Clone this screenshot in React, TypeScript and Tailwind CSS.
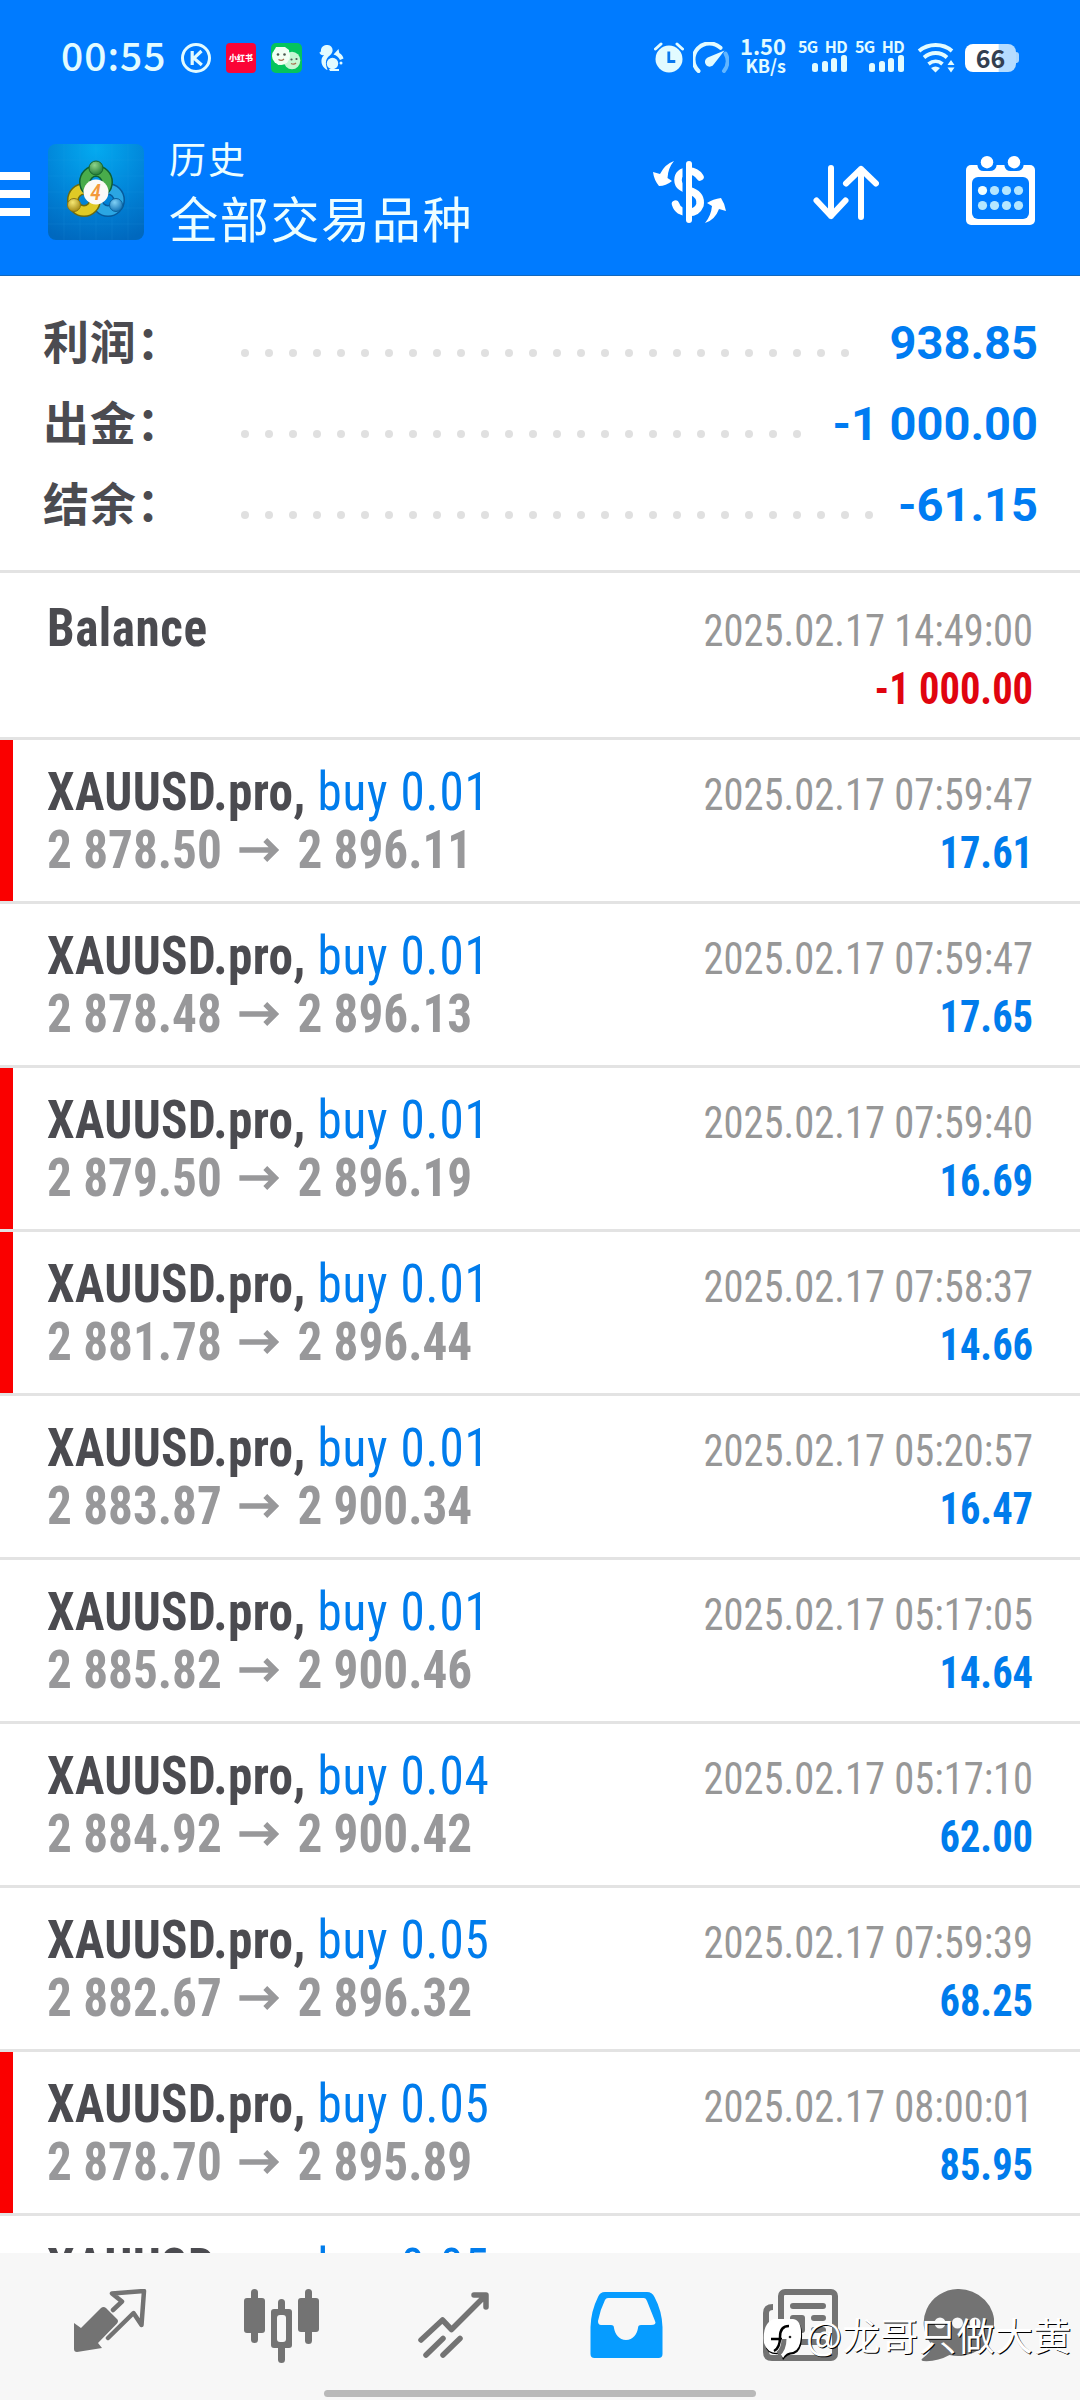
import type { ReactNode } from "react";

interface Deal {
    volume: string;
    open: string;
    close: string;
    time: string;
    profit: string;
    marked?: boolean;
}

const summary = [
    { label: "利润：", value: "938.85", dots: 26 },
    { label: "出金：", value: "-1 000.00", dots: 24 },
    { label: "结余：", value: "-61.15", dots: 27 },
];

const deals: Deal[] = [
    { volume: "0.01", open: "2 878.50", close: "2 896.11", time: "07:59:47", profit: "17.61", marked: true },
    { volume: "0.01", open: "2 878.48", close: "2 896.13", time: "07:59:47", profit: "17.65" },
    { volume: "0.01", open: "2 879.50", close: "2 896.19", time: "07:59:40", profit: "16.69", marked: true },
    { volume: "0.01", open: "2 881.78", close: "2 896.44", time: "07:58:37", profit: "14.66", marked: true },
    { volume: "0.01", open: "2 883.87", close: "2 900.34", time: "05:20:57", profit: "16.47" },
    { volume: "0.01", open: "2 885.82", close: "2 900.46", time: "05:17:05", profit: "14.64" },
    { volume: "0.04", open: "2 884.92", close: "2 900.42", time: "05:17:10", profit: "62.00" },
    { volume: "0.05", open: "2 882.67", close: "2 896.32", time: "07:59:39", profit: "68.25" },
    { volume: "0.05", open: "2 878.70", close: "2 895.89", time: "08:00:01", profit: "85.95", marked: true },
];

function Signal() {
    return (
        <div className="flex w-[48px] flex-col items-end pb-[4px]">
            <span className="whitespace-nowrap font-['Noto_Sans_CJK_SC',sans-serif] text-[16px] font-bold leading-[17px] tracking-[-0.6px] [word-spacing:4px]">5G HD</span>
            <svg width="36" height="18" viewBox="0 0 36 18" fill="currentColor">
                <rect x="1" y="8" width="6" height="9" rx="2.5" />
                <rect x="11" y="6" width="6" height="11" rx="2.5" />
                <rect x="20" y="3" width="6" height="14" rx="2.5" />
                <rect x="30" y="0" width="6" height="17" rx="2.5" />
            </svg>
        </div>
    );
}

function StatusBar() {
    return (
        <div className="flex h-[115px] items-center pl-[61px] pr-[61px] text-[#e2fbff]">
            <span className="w-[120px] pb-[7px] font-['Noto_Sans_CJK_SC',sans-serif] text-[39px] font-medium leading-[40px] tracking-[1px]">00:55</span>
            <svg width="30" height="30" viewBox="0 0 30 30" fill="none" stroke="currentColor" strokeWidth="3">
                <circle cx="15" cy="15" r="13.5" />
                <path d="M11.2 8v14M20.5 8l-7.5 7.2L20.8 22" strokeWidth="3.2" />
            </svg>
            {/* Notification icons */}
            <div className="ml-[15px] flex size-[30px] items-center justify-center rounded-[4px] bg-[#fb0336] font-['Noto_Sans_CJK_SC',sans-serif] text-[8px] font-black text-white">
                <span className="whitespace-nowrap">小红书</span>
            </div>
            <svg className="ml-[15px]" width="31" height="30" viewBox="0 0 31 30">
                <rect width="31" height="30" rx="5" fill="#05c45c" />
                <path d="M3 8l2-4 9 0 4 3 1 13-12 2z" fill="#f2fff4" />
                <ellipse cx="21" cy="17.5" rx="8.3" ry="8.7" fill="#c5f7d3" />
                <circle cx="10" cy="13" r="9" fill="#f2fff4" />
                <g fill="#4d5a50">
                    <circle cx="7" cy="11.5" r="1.3" />
                    <circle cx="13.5" cy="11.5" r="1.3" />
                    <circle cx="20.5" cy="16.5" r="1.1" />
                    <circle cx="25.5" cy="16" r="1.1" />
                </g>
                <path d="M7.5 16.5q3 2 5.5-.5M20 20.5q3 1.5 5-.5" fill="none" stroke="#a86d4d" strokeWidth="1.2" />
            </svg>
            <svg className="ml-[17px]" width="25" height="26" viewBox="0 0 25 26" fill="currentColor">
                <path d="M7 0c5-.5 7.5 3 6.3 7-1 3-3.8 4-5.3 6.5C6 17 7 20.5 8.5 25 4.500 23 2 19.5 2.5 15c.3-2 1.100-3.5 2.500-5C3 10.5 1 9.500.3 7.500 2 7.300 2 6 2 4.500 2.400 2 4.500.3 7 0z" />
                <circle cx="13.5" cy="18.5" r="5.7" />
                <path d="M10 24h10v2h-9zM14.5 9.5l5-5.5.8 4c2.2 1.2 3.6 3 4.2 5.5l-3.5 1.5c-1.5-3-3.5-4.7-6.5-5.5z" />
                <circle cx="22" cy="18" r="1.5" />
            </svg>

            <div className="ml-auto flex items-center">
                <svg width="30" height="31" viewBox="0 0 30 31" fill="currentColor">
                    <circle cx="15" cy="17" r="13.5" />
                    <path d="M1.5 7L7 2M28.5 7L23 2" stroke="currentColor" strokeWidth="3" fill="none" strokeLinecap="round" />
                    <path d="M14.8 9.5v10h6.5" stroke="#0a78ee" strokeWidth="2.8" fill="none" />
                </svg>
                <svg className="ml-[9px]" width="36" height="31" viewBox="0 0 36 31" fill="none" strokeLinecap="round">
                    <path d="M5.5 29A15.6 15.6 0 0 1 27.5 5.8" stroke="currentColor" strokeWidth="4" />
                    <path d="M32.5 11.5A15.6 15.6 0 0 1 31 29" stroke="#62b6ff" strokeWidth="4" />
                    <path d="M31.5 8.5L21 22a4.8 4.8 0 1 1-6.3-6.5z" fill="currentColor" />
                </svg>
                <div className="ml-[12px] flex w-[45px] flex-col items-end pb-[5px] font-['Noto_Sans_CJK_SC',sans-serif] font-bold">
                    <span className="text-[22px] leading-[18px]">1.50</span>
                    <span className="mt-[2px] text-[18px] leading-[18px]">KB/s</span>
                </div>
                <div className="ml-[13px]"><Signal /></div>
                <div className="ml-[9px]"><Signal /></div>
                <svg className="ml-[13px]" width="38" height="31" viewBox="0 0 38 31" fill="none">
                    <path d="M2 9c9.5-8 24-8 33 0M7 15.5c7-6 16.5-6 23 0M11.5 22c4.5-3.5 10-3.5 14 0" stroke="currentColor" strokeWidth="3.8" />
                    <path d="M14 26q4.5-3 9 0l-4.5 4.5zM30.5 23l3.5-5 3.5 5zM30.5 25.5l3.5 5 3.5-5z" fill="currentColor" />
                </svg>
                <div className="ml-[10px] flex items-center">
                    <div className="flex h-[28px] w-[51px] items-center justify-center rounded-[8px] bg-linear-to-r from-white from-65% to-[#b5dcff] to-67% font-['Noto_Sans_CJK_SC',sans-serif] text-[25px] font-bold leading-[28px] text-[#333f50]">
                        <span className="pb-[2px]">66</span>
                    </div>
                    <div className="h-[11px] w-[3px] rounded-r-full bg-[#a9d6ff]" />
                </div>
            </div>
        </div>
    );
}

function AppLogo() {
    return (
        <svg className="ml-[18px]" width="96" height="96" viewBox="0 0 96 96">
            <defs>
                <radialGradient id="bg" cx="0.5" cy="0.05" r="1">
                    <stop offset="0" stopColor="#04aaf0" />
                    <stop offset="0.55" stopColor="#0184d8" />
                    <stop offset="1" stopColor="#0068be" />
                </radialGradient>
                <radialGradient id="green" cx="0.4" cy="0.3" r="0.8">
                    <stop offset="0" stopColor="#8fd48a" />
                    <stop offset="1" stopColor="#14702b" />
                </radialGradient>
                <radialGradient id="gold" cx="0.4" cy="0.3" r="0.8">
                    <stop offset="0" stopColor="#f5e773" />
                    <stop offset="1" stopColor="#9c7f0a" />
                </radialGradient>
                <radialGradient id="sky" cx="0.4" cy="0.3" r="0.8">
                    <stop offset="0" stopColor="#7fd0f5" />
                    <stop offset="1" stopColor="#0768ae" />
                </radialGradient>
            </defs>
            <rect width="96" height="96" rx="8" fill="url(#bg)" />
            <path d="M16 0v96M32 0v96M48 0v96M64 0v96M80 0v96M0 16h96M0 32h96M0 48h96M0 64h96M0 80h96" stroke="#39b0f0" strokeOpacity="0.12" />
            <g fill="none" strokeWidth="9">
                <circle cx="60" cy="56" r="11" stroke="#075a9c" strokeWidth="12" />
                <circle cx="60" cy="56" r="11" stroke="#2ba6e3" />
                <circle cx="36" cy="56" r="11" stroke="#6b6a10" strokeWidth="12" />
                <circle cx="36" cy="56" r="11" stroke="#e0ca25" />
                <circle cx="48" cy="38" r="11" stroke="#0d5f33" strokeWidth="12" />
                <circle cx="48" cy="38" r="11" stroke="#49ac4b" />
            </g>
            <circle cx="48" cy="24" r="7" fill="url(#green)" stroke="#17652e" />
            <circle cx="26" cy="61" r="6.5" fill="url(#gold)" stroke="#8a7411" />
            <circle cx="68" cy="61" r="6.5" fill="url(#sky)" stroke="#0b629e" />
            <circle cx="48" cy="48" r="12.5" fill="#fbfaf7" />
            <text x="47.5" y="55.5" textAnchor="middle" fontFamily="Roboto Condensed, Roboto" fontSize="22" fontWeight="500" fontStyle="italic" fill="#f39a3b">4</text>
        </svg>
    );
}

function Header() {
    return (
        <header className="h-[276px] shrink-0 border-b border-[#1268bd] bg-[#007bff]">
            <StatusBar />
            <div className="flex h-[160px] text-white">
                <div className="mt-[57px] flex w-[30px] flex-col gap-[10px]">
                    <div className="h-[8px] bg-white" />
                    <div className="h-[8px] bg-white" />
                    <div className="h-[8px] bg-white" />
                </div>
                <div className="mt-[29px]"><AppLogo /></div>
                <div className="ml-[25px] mt-[18px] font-['Noto_Sans_CJK_SC',sans-serif] text-[#edfeff]">
                    <div className="text-[37px] leading-[50px] tracking-[2px]">历史</div>
                    <div className="mt-[3px] text-[49px] leading-[62px] tracking-[1.7px]">全部交易品种</div>
                </div>
                <div className="ml-auto mr-[45px] flex">
                    {/* Currency exchange */}
                    <svg className="mt-[46px]" width="74" height="62" viewBox="0 0 74 62">
                        <path d="M47 16Q43 10 36 10C28 10 25 14 25 19C25 27 33 28 39 30.5C46 33.5 48 38 47 44C45 49 41 51.5 36 51.5C28 51.5 24 48 22.5 43" fill="none" stroke="white" strokeWidth="7.5" strokeLinecap="round" />
                        <path d="M31.5 3v56" stroke="#007bff" strokeWidth="4" />
                        <path d="M36 3v56" stroke="white" strokeWidth="6" strokeLinecap="round" />
                        <path d="M21 0Q12 3 7 13L0 11Q1 19 6 25Q13 25 19 20L14.5 17Q15 7 21 0zM52 62Q62 59 66 48L73 50Q72 43 68 37Q60 38 54 42L59 45Q58 55 52 62z" fill="white" />
                    </svg>
                    <svg className="ml-[86px] mt-[50px]" width="66" height="55" viewBox="0 0 66 55" fill="none" stroke="white" strokeWidth="6" strokeLinecap="round" strokeLinejoin="round">
                        <path d="M18 3v48M3.5 35.5L18 51 32.5 35.5M48 52V4M33 18.5L48 4l15 14.5" />
                    </svg>
                    <svg className="ml-[87px] mt-[41px]" width="69" height="69" viewBox="0 0 69 69">
                        <rect y="9" width="69" height="60" rx="5" fill="white" />
                        <rect x="6" y="21" width="57" height="42" rx="6" fill="#007bff" />
                        <path d="M11.5 8v2q1 5 6 5h6q6 0 7-5V8zM38.5 8v2q1 5 6 5h6q6 0 7-5V8z" fill="#007bff" />
                        <circle cx="21" cy="6.2" r="6.2" fill="white" />
                        <circle cx="48" cy="6.2" r="6.2" fill="white" />
                        {[16.5, 28.5, 40.5, 52.5].map((x) => (
                            <g key={x} fill={x === 16.5 ? "#f2ffff" : "#b4e6ff"}>
                                <circle cx={x} cy="34.5" r="4.6" />
                                <circle cx={x} cy="49.5" r="4.6" fill="#b4e6ff" />
                            </g>
                        ))}
                    </svg>
                </div>
            </div>
        </header>
    );
}

interface RowProps {
    left: ReactNode;
    date: string;
    profit: string;
    negative?: boolean;
    marked?: boolean;
    first?: boolean;
}

function Row({ left, date, profit, negative, marked, first }: RowProps) {
    return (
        <div className={`flex shrink-0 border-b-[3px] border-[#e3e3e3] ${first ? "h-[167px] pt-[3px]" : "h-[164px]"}`}>
            <div className={`w-[13px] ${marked ? "bg-[#fa0000]" : ""}`} />
            <div className="ml-[34px] flex-1 origin-left scale-x-[0.911] whitespace-nowrap pt-[23px] text-[54px] font-bold leading-[58px] text-[#4b4b50]">{left}</div>
            <div className="mr-[47px] origin-right scale-x-[0.9] pt-[26px] text-right text-[45px] leading-[58px]">
                <div className="text-[#979797]">{date}</div>
                <div className={`font-bold ${negative ? "text-[#e0040f]" : "text-[#007cec]"}`}>{profit}</div>
            </div>
        </div>
    );
}

function Symbol({ volume }: { volume: string }) {
    return (
        <div className="tracking-[0.4px]">
            XAUUSD.pro, <span className="font-normal tracking-[0.9px] text-[#007cec]">buy {volume}</span>
        </div>
    );
}

function NavBar() {
    return (
        <nav className="relative h-[147px] shrink-0 bg-[#f7f7f7] text-[#737373]">
            <div className="flex pl-[74px] pt-[36px]">
                {/* Quotes */}
                <svg width="73" height="75" viewBox="0 0 73 75" fill="currentColor">
                    <path d="M0 34l7 5 20-20q2.5-2 5 0l11 11q2 2 0 4.5L24 54l4 5-25 4q-3 0-3-3z" />
                    <path d="M39 21l9-8.5L38 4.5 70 2l-2.5 34-8-12L34 49" fill="none" stroke="currentColor" strokeWidth="4.5" strokeLinejoin="round" strokeLinecap="round" />
                </svg>
                {/* Charts */}
                <svg className="ml-[97px]" width="75" height="75" viewBox="0 0 75 75" fill="currentColor">
                    <rect x="7" y="0" width="7" height="54" rx="3.5" />
                    <rect x="0" y="9" width="21" height="35" rx="3" />
                    <rect x="61" y="0" width="7" height="55" rx="3.5" />
                    <rect x="54" y="9" width="21" height="34" rx="3" />
                    <rect x="34" y="10" width="7" height="64" rx="3.5" />
                    <rect x="27" y="20" width="21" height="39" rx="3" />
                    <rect x="33" y="26" width="9" height="27" rx="3" fill="#f7f7f7" />
                </svg>
                {/* Trade */}
                <svg className="ml-[99px]" width="72" height="75" viewBox="0 0 72 75" fill="none" stroke="currentColor" strokeWidth="5.5" strokeLinecap="round" strokeLinejoin="round">
                    <path d="M3 51L24.5 31l9 9.5L67 7M56 6h12v12" />
                    <path d="M8 66l17-16.5M25 66l17-16.5" />
                </svg>
                {/* History */}
                <svg className="ml-[100px]" width="73" height="75" viewBox="0 0 73 75">
                    <path fillRule="evenodd" fill="#069cff" d="M15 3h42q5 0 7.5 5Q72 22 72.5 38v27q0 4-4 4h-64q-4 0-4-4V38Q1 22 8 8q2-5 7-5zM18 9q-2 0-3 2Q10 21 8 32q0 4 3 4h10q3 0 3 3c1 6 5 12 12 12s11-6 12-12q0-3 3-3h10q6 0 4-4l-8-20q-1-3-3-3z" />
                </svg>
                {/* News */}
                <svg className="ml-[100px]" width="75" height="75" viewBox="0 0 75 75" fill="none" stroke="currentColor" strokeWidth="6">
                    <rect x="18" y="3" width="54" height="66" rx="4" />
                    <path d="M10 18q-7 0-7 6v39q0 6 6 6h58" />
                    <path d="M30 17h30M51 29h9M51 41h9M30 53h30" strokeLinecap="round" />
                    <rect x="27" y="26" width="15" height="18" rx="3" fill="currentColor" stroke="none" />
                </svg>
                {/* Messages */}
                <svg className="ml-[83px]" width="73" height="75" viewBox="0 0 73 75">
                    <path d="M36.5 0a36 33.5 0 1 1-8 66Q16 73 2 72q-3-1 0-3 8-6 9-13A35 34 0 0 1 36.5 0z" fill="currentColor" />
                    <circle cx="19" cy="34" r="5.5" fill="#f7f7f7" />
                    <circle cx="36.5" cy="34" r="5.5" fill="#f7f7f7" />
                    <circle cx="54" cy="34" r="5.5" fill="#f7f7f7" />
                </svg>
            </div>
            <div className="absolute bottom-[3px] left-[324px] h-[7px] w-[432px] rounded-full bg-[#b9b9b9]" />
            {/* Author tag */}
            <div className="absolute left-[762px] top-[65px] flex whitespace-nowrap text-white">
                <svg width="43" height="44" viewBox="0 0 43 44">
                    <path d="M13 3h20q8 2 7 18-1 13-8 15-7 0-11 6l-2-6Q5 38 3 27 1 7 13 3z" fill="black" />
                    <path d="M12 1h19q9 1 8 18-1 13-8 15-7 0-10 6l-3-5Q5 36 2 25 0 5 12 1z" fill="white" />
                    <path d="M12 33Q18 30 18 19T27 8M9 21h11" fill="none" stroke="black" strokeWidth="2.5" />
                    <path d="M16 36Q22 31 22 21" fill="none" stroke="#737373" strokeWidth="5" />
                    <circle cx="28" cy="19" r="1.3" fill="#222" />
                </svg>
                <span className="-mt-[9px] ml-px font-['Noto_Sans_CJK_SC',sans-serif] text-[38px] leading-[50px] tracking-[0.2px] [text-shadow:1px_1px_0_#000]">@龙哥只做大黄</span>
            </div>
        </nav>
    );
}

export default function App() {
    return (
        <div className="flex h-[2400px] w-[1080px] flex-col overflow-hidden bg-white font-['Roboto_Condensed','Noto_Sans_CJK_SC',sans-serif]">
            <Header />
            <section className="h-[297px] shrink-0 border-b-[3px] border-[#e3e3e3] pl-[43px] pr-[42px] pt-[27px]">
                {summary.map(({ label, value, dots }) => (
                    <div key={label} className="flex h-[81px] items-center">
                        <div className="w-[198px] whitespace-nowrap pb-[9px] font-['Noto_Sans_CJK_SC',sans-serif] text-[46px] font-bold leading-[60px] tracking-[0.8px] text-[#4b4b50]">{label}</div>
                        <div className="flex gap-[16px] pt-[18px]">
                            {Array.from({ length: dots }, (_, i) => (
                                <span key={i} className="size-[8px] rounded-full bg-[#e0e0e0]" />
                            ))}
                        </div>
                        <div className="ml-auto pb-[2px] font-['Roboto'] text-[47px] font-bold leading-[60px] text-[#007cf2]">{value}</div>
                    </div>
                ))}
            </section>
            <main className="flex min-h-0 flex-1 flex-col overflow-hidden">
                <Row first left={<div className="tracking-[0.6px]">Balance</div>} date="2025.02.17 14:49:00" profit="-1 000.00" negative />
                {deals.map((d, i) => (
                    <Row
                        key={i}
                        marked={d.marked}
                        date={`2025.02.17 ${d.time}`}
                        profit={d.profit}
                        left={
                            <>
                                <Symbol volume={d.volume} />
                                <div className="flex items-center text-[#98989a]">
                                    {d.open}
                                    <svg className="ml-[19px] mr-[20px]" width="44" height="26" viewBox="0 0 40 26" preserveAspectRatio="none" fill="none" stroke="currentColor" strokeWidth="5.5">
                                        <path d="M0 13h36M26 3l10 10-10 10" />
                                    </svg>
                                    {d.close}
                                </div>
                            </>
                        }
                    />
                ))}
                {/* Next deal, mostly hidden behind the nav bar */}
                <div className="ml-[47px] origin-left scale-x-[0.911] whitespace-nowrap pt-[23px] text-[54px] font-bold leading-[58px] text-[#4b4b50]">
                    <Symbol volume="0.05" />
                </div>
            </main>
            <NavBar />
        </div>
    );
}
